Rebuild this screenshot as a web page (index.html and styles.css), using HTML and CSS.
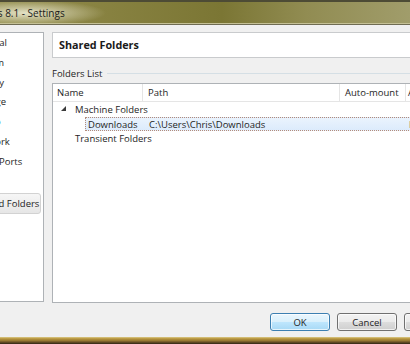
FILE: index.html
```html
<!DOCTYPE html>
<html>
  <head>
    <title>Windows 8.1 - Settings</title>
    <link rel="stylesheet" href="styles.css">
  </head>
  <body>
    <div class="window">
      <div class="titlebar">
        <span class="title">Windows 8.1 - Settings</span>
      </div>

      <div class="dialog">
        <ul class="pages">
          <li>General</li>
          <li>System</li>
          <li>Display</li>
          <li>Storage</li>
          <li class="audio">Audio</li>
          <li>Network</li>
          <li>Serial Ports</li>
          <li>USB</li>
          <li class="selected">Shared Folders</li>
        </ul>

        <div class="content">
          <div class="page-title">Shared Folders</div>

          <div class="group-label"><span>Folders List</span></div>

          <div class="tree">
            <div class="tree-head">
              <div class="col name">Name</div>
              <div class="col path">Path</div>
              <div class="col auto">Auto-mount</div>
              <div class="col access">Access</div>
            </div>
            <div class="row group">
              <svg class="arrow" width="6" height="6" viewBox="0 0 6 6"><polygon points="5,0 5,5 0,5" fill="#3a3a3a"/></svg>
              <span>Machine Folders</span>
            </div>
            <div class="row item selected">
              <div class="col name">Downloads</div>
              <div class="col path">C:\Users\Chris\Downloads</div>
              <div class="col auto"></div>
              <div class="col access">Full</div>
            </div>
            <div class="row group">
              <span>Transient Folders</span>
            </div>
          </div>
        </div>
      </div>

      <div class="buttons">
        <button type="button" class="default">OK</button>
        <button type="button">Cancel</button>
        <button type="button">Help</button>
      </div>
    </div>
    <div class="frame-bottom"></div>
  </body>
</html>
```

FILE: styles.css
```css
* {
  box-sizing: border-box;
  font-family: "Open Sans", "Noto Sans", sans-serif;
}
html,
body {
  margin: 0;
  width: 410px;
  height: 344px;
  overflow: hidden;
  background: #f0f0f0;
}
.window {
  width: 560px;
  margin-left: -86px;
  height: 337px;
  display: flex;
  flex-direction: column;
}
.titlebar {
  height: 25px;
  border-top: 2px solid #4d4b35;
  border-bottom: 1px solid #6f6c52;
  box-shadow: inset 0 -1px 0 #c4c096;
  background:
    radial-gradient(ellipse 80px 13px at 112px 11px, rgba(232, 230, 204, 0.95), rgba(232, 230, 204, 0) 100%),
    linear-gradient(90deg, #9a9556 0%, #8a8443 30%, #7b7634 55%, #918c52 70%, #aaa77a 100%);
  display: flex;
  align-items: center;
}
.title {
  padding-left: 46px;
  font-size: 10px;
  color: #1a1a1a;
}
.dialog {
  display: flex;
  gap: 8px;
  padding-top: 7px;
}
.pages {
  flex: none;
  list-style: none;
  margin: 0;
  padding: 0 2px 0 0;
  width: 130px;
  height: 270px;
  background: #fff;
  border: 1px solid #aeb2b6;
  overflow: hidden;
}
.pages li {
  height: 19.8px;
  line-height: 20px;
  padding-left: 57px;
  font-size: 9.5px;
  color: #1e1e1e;
  white-space: nowrap;
}
.pages li.audio {
  padding-left: 60px;
  color: #2a7fd4;
}
.pages li.selected {
  margin-top: 2px;
  background: linear-gradient(#f6f6f6, #e6e6e6);
  border: 1px solid #d2d2d2;
  border-radius: 3px;
  height: 21px;
  line-height: 19px;
}
.content {
  flex: 1;
  min-width: 0;
  display: flex;
  flex-direction: column;
  padding-right: 10px;
}
.page-title {
  height: 26px;
  background: #fff;
  border: 1px solid #c9cbcd;
  padding-left: 6px;
  line-height: 24px;
  font-size: 10.8px;
  font-weight: bold;
  color: #1a1a1a;
}
.group-label {
  display: flex;
  align-items: center;
  gap: 5px;
  height: 10px;
  margin: 10px 0 5px;
  font-size: 9.5px;
  color: #1e1e1e;
}
.group-label::after {
  content: "";
  flex: 1;
  border-top: 1px solid #d5dfe5;
}
.tree {
  height: 220px;
  background: #fff;
  border: 1px solid #aeb2b6;
  font-size: 9.5px;
  color: #1e1e1e;
  overflow: hidden;
}
.tree-head {
  display: flex;
  height: 18px;
  line-height: 17px;
  border-bottom: 1px solid #e5e5e5;
}
.tree-head .col {
  border-right: 1px solid #e5e5e5;
}
.col {
  white-space: nowrap;
  overflow: hidden;
  flex: none;
}
.col.name {
  width: 90px;
  padding-left: 4px;
}
.col.path {
  width: 197px;
  padding-left: 5px;
}
.col.auto {
  width: 66px;
  padding-left: 5px;
}
.col.access {
  width: 80px;
  padding-left: 2px;
}
.row {
  height: 14.5px;
  line-height: 13px;
  white-space: nowrap;
}
.row.group {
  display: flex;
  align-items: center;
  padding-left: 8px;
}
.row.group .arrow {
  margin-right: 8px;
}
.row.group span {
  margin-left: 14px;
}
.row.group .arrow + span {
  margin-left: 0;
}
.row.item {
  display: flex;
  margin-left: 32px;
  background: linear-gradient(#eaf3fd, #dcebfc);
  border: 1px dotted #b38b7a;
}
.row.item .col.name {
  width: 58px;
  padding-left: 2px;
}
.buttons {
  display: flex;
  justify-content: flex-end;
  gap: 7px;
  padding: 10px 10px 0 0;
}
button {
  width: 60px;
  height: 18px;
  padding: 0;
  font-size: 9.5px;
  color: #1e1e1e;
  border: 1px solid #707070;
  border-radius: 3px;
  background: linear-gradient(#f2f2f2 0%, #ebebeb 50%, #dddddd 51%, #cfcfcf 100%);
  box-shadow: inset 0 0 0 1px rgba(255, 255, 255, 0.7);
}
button.default {
  border-color: #3c7fb1;
  background: linear-gradient(#eaf6fd 0%, #d9f0fc 50%, #bee6fd 51%, #a7d9f5 100%);
}
.frame-bottom {
  height: 7px;
  background: linear-gradient(#dccb8a 0%, #b8963e 25%, #9a7a34 50%, #5b4421 80%, #2e2414 100%);
}
```
